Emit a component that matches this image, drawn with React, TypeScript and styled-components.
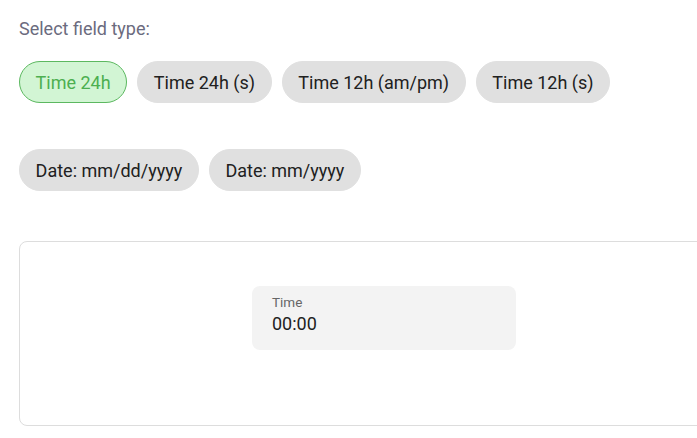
import React, { useState } from "react";
import styled, { createGlobalStyle } from "styled-components";

const GlobalStyle = createGlobalStyle`
  body {
    margin: 0;
    background: #ffffff;
    font-family: Roboto, "Liberation Sans", sans-serif;
    overflow: hidden;
  }
`;

// Styled Components
const Page = styled.div`
  width: 730px;
  padding: 18px 0 0 19px;
`;

const Prompt = styled.div`
  font-size: 18px;
  line-height: 22px;
  color: #6b6b7e;
`;

const ChipList = styled.div`
  display: flex;
  flex-wrap: wrap;
  column-gap: 10px;
  row-gap: 46px;
  margin-top: 21px;
`;

const Chip = styled.button<{ $active?: boolean }>`
  height: 42px;
  padding: 0 15.6px;
  border-radius: 21px;
  border: 1px solid ${(p) => (p.$active ? "#5cb860" : "#e0e0e0")};
  background: ${(p) => (p.$active ? "#d2f5d4" : "#e0e0e0")};
  color: ${(p) => (p.$active ? "#4caf50" : "#212121")};
  font-family: Roboto, "Liberation Sans", sans-serif;
  font-size: 18px;
  cursor: pointer;
`;

const Preview = styled.div`
  margin-top: 50px;
  border: 1px solid #dddddd;
  border-radius: 8px;
  padding: 44px 0 75px;
  display: flex;
  justify-content: center;
`;

const Field = styled.div`
  width: 264px;
  height: 64px;
  box-sizing: border-box;
  background: #f3f3f3;
  border-radius: 8px;
  padding: 8px 20px 0;
`;

const FieldLabel = styled.div`
  font-size: 13.5px;
  line-height: 16px;
  color: #666666;
`;

const FieldValue = styled.div`
  margin-top: 3px;
  font-size: 18px;
  line-height: 22px;
  color: #212121;
`;

const types = [
  "Time 24h",
  "Time 24h (s)",
  "Time 12h (am/pm)",
  "Time 12h (s)",
  "Date: mm/dd/yyyy",
  "Date: mm/yyyy",
];

const App = () => {
  const [selected, setSelected] = useState(0);

  return (
    <>
      <GlobalStyle />
      <Page>
        <Prompt>Select field type:</Prompt>
        <ChipList>
          {types.map((t, i) => (
            <Chip key={t} $active={i === selected} onClick={() => setSelected(i)}>
              {t}
            </Chip>
          ))}
        </ChipList>
        <Preview>
          <Field>
            <FieldLabel>Time</FieldLabel>
            <FieldValue>00:00</FieldValue>
          </Field>
        </Preview>
      </Page>
    </>
  );
};

export default App;
